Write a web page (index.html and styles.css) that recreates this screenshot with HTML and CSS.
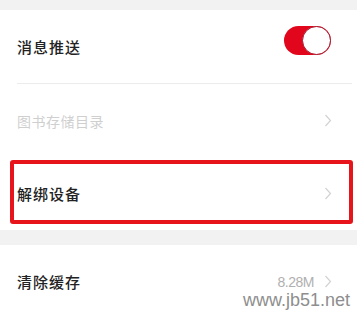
FILE: index.html
```html
<!DOCTYPE html>
<html lang="zh">
<head>
<meta charset="utf-8">
<link rel="stylesheet" href="styles.css">
</head>
<body>
<div class="page">
  <div class="group">
    <div class="row">
      <span class="label">消息推送</span>
      <span class="toggle"><span class="knob"></span></span>
    </div>
    <div class="divider"></div>
    <div class="row">
      <span class="label muted">图书存储目录</span>
      <svg class="chev" width="8" height="13" viewBox="0 0 8 13"><path d="M1.5 1 L6.5 6.5 L1.5 12" fill="none" stroke="#d2d2d2" stroke-width="1.2"/></svg>
    </div>
    <div class="row highlight">
      <span class="label">解绑设备</span>
      <svg class="chev" width="8" height="13" viewBox="0 0 8 13"><path d="M1.5 1 L6.5 6.5 L1.5 12" fill="none" stroke="#d2d2d2" stroke-width="1.2"/></svg>
    </div>
  </div>
  <div class="group second">
    <div class="row">
      <span class="label">清除缓存</span>
      <span class="right"><span class="value">8.28M</span><svg class="chev" width="8" height="13" viewBox="0 0 8 13"><path d="M1.5 1 L6.5 6.5 L1.5 12" fill="none" stroke="#d2d2d2" stroke-width="1.2"/></svg></span>
    </div>
  </div>
  <div class="watermark">www.jb51.net</div>
</div>
</body>
</html>
```

FILE: styles.css
```css
html, body {
  margin: 0;
  padding: 0;
  background: #f2f2f2;
}
.page {
  position: relative;
  width: 357px;
  height: 317px;
  padding-top: 10px;
  box-sizing: border-box;
  overflow: hidden;
  font-family: "Noto Sans CJK SC", "Noto Sans", sans-serif;
}
.group {
  background: #fff;
}
.second {
  margin-top: 15px;
}
.row {
  position: relative;
  height: 73px;
  display: flex;
  align-items: center;
  justify-content: space-between;
  padding: 0 25px 0 17px;
  box-sizing: border-box;
}
.label {
  font-size: 15px;
  letter-spacing: 1px;
  color: #222;
  font-weight: 500;
}
.label.muted {
  font-size: 14px;
  letter-spacing: 0.5px;
  color: #cfcfcf;
  font-weight: 400;
}
.divider {
  height: 1px;
  background: #ececec;
  margin: 0 5px 0 17px;
}
.toggle {
  position: relative;
  width: 47px;
  height: 29px;
  border-radius: 15px;
  background: #e1061b;
  margin-right: 1px;
  margin-bottom: 12px;
  flex: none;
}
.knob {
  position: absolute;
  right: 0;
  top: 0;
  width: 29px;
  height: 29px;
  box-sizing: border-box;
  border-radius: 50%;
  background: #fff;
  border: 1.5px solid #a8132a;
}
.chev {
  display: block;
  flex: none;
}
.highlight::after {
  content: "";
  position: absolute;
  left: 10px;
  right: 4px;
  top: 3px;
  bottom: 6px;
  border: 4px solid #e8141c;
  border-radius: 3px;
}
.right {
  display: flex;
  align-items: center;
  gap: 10px;
}
.value {
  font-family: "Liberation Sans Narrow", "Liberation Sans", sans-serif;
  font-size: 14px;
  color: #b0b0b0;
  letter-spacing: -0.5px;
}
.watermark {
  position: absolute;
  right: 7px;
  bottom: 6px;
  font-family: "Liberation Sans", Arial, sans-serif;
  font-size: 18px;
  color: #8e8e8e;
}
```
